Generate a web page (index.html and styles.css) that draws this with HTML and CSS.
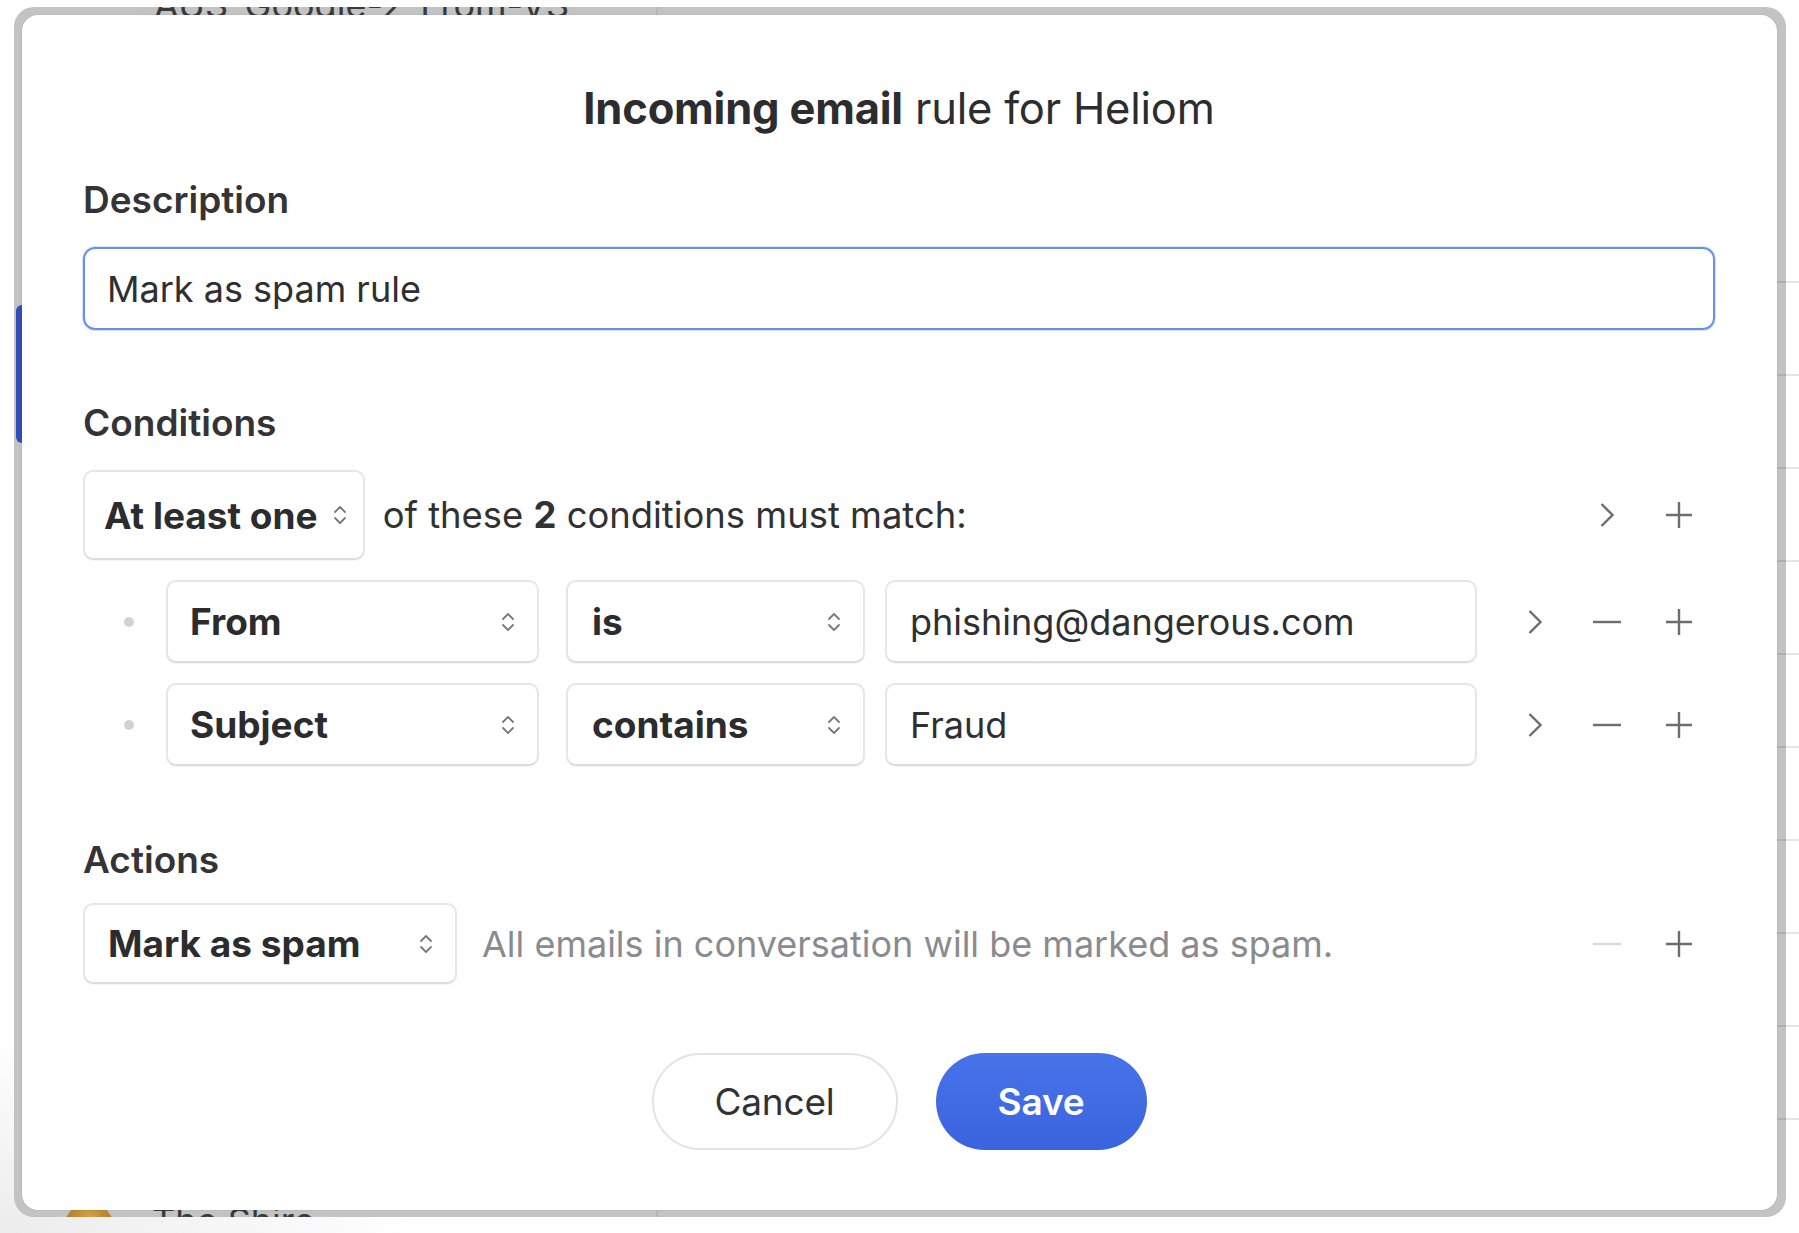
FILE: index.html
```html
<!DOCTYPE html>
<html lang="en">
<head>
<meta charset="utf-8">
<title>Incoming email rule for Heliom</title>
<link rel="stylesheet" href="styles.css">
</head>
<body>
<div class="screen">
  <div class="backdrop">
    <div class="app-top-text">AUS-Google-2-From-VS-</div>
    <div class="app-divider"></div>
    <div class="app-selected"></div>
    <div class="app-bottom">
      <span class="app-avatar"></span>
      <span class="app-bottom-text">The Shire</span>
    </div>
  </div>
  <div class="app-separators"></div>

  <div class="dialog">
    <h1 class="title"><strong>Incoming email</strong> rule for Heliom</h1>

    <div class="section-label label-description">Description</div>
    <div class="text-input focused">Mark as spam rule</div>

    <div class="section-label label-conditions">Conditions</div>

    <div class="row match-row">
      <div class="select select-auto">
        <span class="select-text">At least one</span>
        <svg class="updown" width="14" height="22" viewBox="0 0 14 22"><path d="M2 8 L7 3 L12 8 M2 14 L7 19 L12 14"/></svg>
      </div>
      <span class="match-text">of these <b>2</b> conditions must match:</span>
      <div class="row-actions">
        <span class="slot"></span>
        <span class="slot"><svg class="ic" width="16" height="26" viewBox="0 0 16 26"><path d="M2.5 2 L13.5 13 L2.5 24"/></svg></span>
        <span class="slot"><svg class="ic" width="28" height="28" viewBox="0 0 28 28"><path d="M14 1 V27 M1 14 H27"/></svg></span>
      </div>
    </div>

    <div class="row cond-row">
      <span class="bullet-col"><span class="bullet"></span></span>
      <div class="select select-field">
        <span class="select-text">From</span>
        <svg class="updown" width="14" height="22" viewBox="0 0 14 22"><path d="M2 8 L7 3 L12 8 M2 14 L7 19 L12 14"/></svg>
      </div>
      <div class="select select-op">
        <span class="select-text">is</span>
        <svg class="updown" width="14" height="22" viewBox="0 0 14 22"><path d="M2 8 L7 3 L12 8 M2 14 L7 19 L12 14"/></svg>
      </div>
      <div class="value-input">phishing@dangerous.com</div>
      <div class="row-actions">
        <span class="slot"><svg class="ic" width="16" height="26" viewBox="0 0 16 26"><path d="M2.5 2 L13.5 13 L2.5 24"/></svg></span>
        <span class="slot"><svg class="ic" width="28" height="4" viewBox="0 0 28 4"><path d="M0 2 H28"/></svg></span>
        <span class="slot"><svg class="ic" width="28" height="28" viewBox="0 0 28 28"><path d="M14 1 V27 M1 14 H27"/></svg></span>
      </div>
    </div>

    <div class="row cond-row">
      <span class="bullet-col"><span class="bullet"></span></span>
      <div class="select select-field">
        <span class="select-text">Subject</span>
        <svg class="updown" width="14" height="22" viewBox="0 0 14 22"><path d="M2 8 L7 3 L12 8 M2 14 L7 19 L12 14"/></svg>
      </div>
      <div class="select select-op">
        <span class="select-text">contains</span>
        <svg class="updown" width="14" height="22" viewBox="0 0 14 22"><path d="M2 8 L7 3 L12 8 M2 14 L7 19 L12 14"/></svg>
      </div>
      <div class="value-input">Fraud</div>
      <div class="row-actions">
        <span class="slot"><svg class="ic" width="16" height="26" viewBox="0 0 16 26"><path d="M2.5 2 L13.5 13 L2.5 24"/></svg></span>
        <span class="slot"><svg class="ic" width="28" height="4" viewBox="0 0 28 4"><path d="M0 2 H28"/></svg></span>
        <span class="slot"><svg class="ic" width="28" height="28" viewBox="0 0 28 28"><path d="M14 1 V27 M1 14 H27"/></svg></span>
      </div>
    </div>

    <div class="section-label label-actions">Actions</div>

    <div class="row action-row">
      <div class="select select-action">
        <span class="select-text">Mark as spam</span>
        <svg class="updown" width="14" height="22" viewBox="0 0 14 22"><path d="M2 8 L7 3 L12 8 M2 14 L7 19 L12 14"/></svg>
      </div>
      <span class="action-desc">All emails in conversation will be marked as spam.</span>
      <div class="row-actions">
        <span class="slot"></span>
        <span class="slot"><svg class="ic ic-disabled" width="28" height="4" viewBox="0 0 28 4"><path d="M0 2 H28"/></svg></span>
        <span class="slot"><svg class="ic" width="28" height="28" viewBox="0 0 28 28"><path d="M14 1 V27 M1 14 H27"/></svg></span>
      </div>
    </div>

    <div class="buttons">
      <button class="btn btn-cancel">Cancel</button>
      <button class="btn btn-save">Save</button>
    </div>
  </div>
</div>
</body>
</html>
```

FILE: styles.css
```css
* { box-sizing: border-box; }

html, body {
  margin: 0;
  padding: 0;
}

body {
  width: 1799px;
  height: 1233px;
  overflow: hidden;
  background: #ffffff;
  font-family: Inter, "Noto Sans", "Liberation Sans", sans-serif;
  color: #2c2c2f;
}

.screen {
  position: relative;
  width: 1799px;
  height: 1233px;
  background: radial-gradient(ellipse 420px 200px at 0 1233px, #ececec, rgba(255,255,255,0));
}

/* underlying app, seen around the sheet */
.backdrop {
  position: absolute;
  left: 14px;
  top: 7px;
  width: 1772px;
  height: 1210px;
  background: #c3c3c3;
  border-radius: 20px;
  overflow: hidden;
}

.app-top-text {
  position: absolute;
  left: 140px;
  top: -22px;
  font-size: 36px;
  line-height: 40px;
  color: #3a3a3c;
  white-space: nowrap;
}

.app-divider {
  position: absolute;
  left: 642px;
  top: 0;
  width: 2px;
  height: 100%;
  background: rgba(0, 0, 0, 0.06);
}

.app-selected {
  position: absolute;
  left: 2px;
  top: 298px;
  width: 12px;
  height: 138px;
  border-radius: 6px;
  background: #2f4fb6;
}

.app-bottom {
  position: absolute;
  left: 50px;
  top: 1196px;
  display: flex;
  align-items: flex-start;
  gap: 38px;
}

.app-avatar {
  width: 50px;
  height: 50px;
  border-radius: 50%;
  background: radial-gradient(circle at 50% 30%, #d8a444, #8a5a1c);
}

.app-bottom-text {
  font-size: 36px;
  line-height: 44px;
  margin-top: -4px;
  color: #3a3a3c;
}

.app-separators {
  position: absolute;
  left: 1777px;
  top: 281px;
  width: 22px;
  height: 930px;
  background: repeating-linear-gradient(to bottom, rgba(0,0,0,0.1) 0, rgba(0,0,0,0.1) 2px, transparent 2px, transparent 93px);
}

/* dialog */
.dialog {
  position: absolute;
  left: 22px;
  top: 15px;
  width: 1755px;
  height: 1195px;
  background: #ffffff;
  border-radius: 16px;
  box-shadow: 0 0 2px rgba(0, 0, 0, 0.12);
  padding: 68px 62px 0 61px;
  display: flex;
  flex-direction: column;
}

.title {
  margin: 0;
  font-size: 43.5px;
  line-height: 50px;
  font-weight: 400;
  text-align: center;
  color: #2d2d30;
  letter-spacing: -0.2px;
}

.title strong {
  font-weight: 700;
}

.section-label {
  font-size: 37px;
  line-height: 44px;
  font-weight: 600;
  color: #343437;
}

.label-description { margin-top: 45px; }
.label-conditions { margin-top: 71px; }
.label-actions { margin-top: 72px; }

.text-input {
  margin-top: 25px;
  height: 83px;
  border: 2.5px solid #6a8ef0;
  border-radius: 12px;
  padding: 0 22px;
  display: flex;
  align-items: center;
  font-size: 36px;
  color: #2f2f32;
}

.text-input.focused {
  box-shadow: 0 0 0 1px rgba(106, 142, 240, 0.25);
}

.row {
  display: flex;
  align-items: center;
}

.match-row {
  margin-top: 25px;
  height: 90px;
}

.cond-row {
  margin-top: 20px;
  height: 83px;
}

.action-row {
  margin-top: 21px;
  height: 81px;
}

.select {
  height: 100%;
  display: flex;
  align-items: center;
  justify-content: space-between;
  border: 2px solid #e6e6e6;
  border-bottom-color: #dcdcdc;
  border-radius: 10px;
  background: #fff;
  box-shadow: 0 1px 1px rgba(0, 0, 0, 0.05);
  padding: 0 22px;
  font-size: 37px;
  font-weight: 700;
  color: #2c2c2f;
}

.select-auto {
  padding: 0 16px 0 19px;
  gap: 15px;
}

.select-field {
  width: 373px;
}

.select-op {
  width: 299px;
  margin-left: 27px;
  padding-left: 24px;
}

.select-action {
  width: 374px;
  padding-left: 23px;
}

.updown {
  flex: none;
  fill: none;
  stroke: #79797c;
  stroke-width: 1.8;
  stroke-linecap: round;
  stroke-linejoin: round;
}

.match-text {
  margin-left: 18px;
  font-size: 36.4px;
  color: #313134;
}

.match-text b {
  font-weight: 700;
}

.bullet-col {
  width: 83px;
  display: flex;
  align-items: center;
}

.bullet {
  margin-left: 41px;
  width: 10px;
  height: 10px;
  border-radius: 50%;
  background: #d2d2d4;
}

.value-input {
  width: 592px;
  height: 100%;
  margin-left: 20px;
  border: 2px solid #e6e6e6;
  border-bottom-color: #dcdcdc;
  border-radius: 10px;
  box-shadow: 0 1px 1px rgba(0, 0, 0, 0.05);
  padding: 0 23px;
  display: flex;
  align-items: center;
  font-size: 36px;
  color: #2f2f32;
}

.action-desc {
  margin-left: 25px;
  font-size: 36px;
  color: #8b8b8f;
}

.row-actions {
  margin-left: auto;
  display: flex;
  align-items: center;
}

.slot {
  width: 72px;
  display: flex;
  justify-content: center;
  align-items: center;
}

.ic {
  fill: none;
  stroke: #6d6d70;
  stroke-width: 2.4;
}

.ic-disabled {
  stroke: #d9d9db;
}

.buttons {
  margin-top: 69px;
  display: flex;
  justify-content: center;
  gap: 38px;
}

.btn {
  height: 97px;
  border-radius: 49px;
  font-family: Inter, "Noto Sans", "Liberation Sans", sans-serif;
  font-size: 37px;
  letter-spacing: -0.2px;
  cursor: pointer;
}

.btn-cancel {
  width: 246px;
  background: #fff;
  border: 2px solid #e3e3e5;
  color: #323235;
  font-weight: 400;
}

.btn-save {
  width: 211px;
  border: none;
  background: linear-gradient(to bottom, #4773e8, #3a64df);
  color: #fff;
  font-weight: 600;
}
```
